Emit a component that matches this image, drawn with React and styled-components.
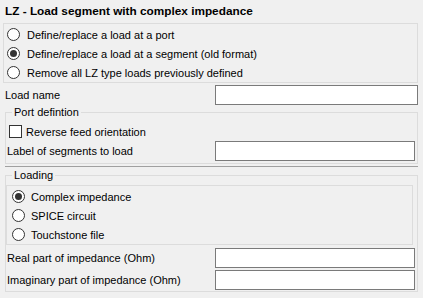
import React from 'react'
import styled, { createGlobalStyle } from 'styled-components'

const Global = createGlobalStyle`
  body {
    margin: 0;
    background: #f0f0f0;
    font-family: "Liberation Sans", Arial, sans-serif;
    font-size: 11px;
    color: #000;
  }
`

const Dialog = styled.div`
  width: 423px;
  height: 298px;
  box-sizing: border-box;
  padding: 3px 5px 0 3px;
`

const Title = styled.div`
  margin-left: 2px;
  height: 16px;
  line-height: 16px;
  font-weight: bold;
  font-size: 11.8px;
`

const OptionBox = styled.div`
  margin-top: 4px;
  height: 60px;
  box-sizing: border-box;
  border: 1px solid #dcdcdc;
  padding: 1px 0 0 3px;
`

const Option = styled.label`
  display: flex;
  align-items: center;
  gap: ${p => p.$gap || 7}px;
  height: 19px;
  margin-left: ${p => p.$indent || 0}px;
`

const Radio = styled.span`
  width: 13px;
  height: 13px;
  box-sizing: border-box;
  border-radius: 50%;
  border: 1px solid #333;
  background: #fff;
  display: flex;
  align-items: center;
  justify-content: center;
  &::after {
    content: '';
    width: 7px;
    height: 7px;
    border-radius: 50%;
    background: ${p => (p.$on ? '#333' : 'transparent')};
  }
`

const Check = styled.span`
  width: 13px;
  height: 13px;
  box-sizing: border-box;
  border: 1px solid #333;
  background: #fff;
`

const Field = styled.div`
  display: flex;
  align-items: center;
  justify-content: space-between;
  height: 20px;
  margin: ${p => p.$m || '0'};
`

const Input = styled.input`
  width: ${p => p.$w || 200}px;
  height: 20px;
  box-sizing: border-box;
  border: 1px solid #7a7a7a;
  background: #fff;
  margin: 0;
  padding: 0 3px;
  font: inherit;
`

const Group = styled.fieldset`
  margin: ${p => p.$m || '0 0 0 2px'};
  padding: ${p => p.$pad || '3px 2px 2px 1px'};
  border: 1px solid #dcdcdc;
  min-width: 0;
`

const Legend = styled.legend`
  margin-left: 5px;
  padding: 0 2px;
  line-height: 14px;
  height: 14px;
`

const Separator = styled.div`
  margin: 2px 0 0 2px;
  height: 1px;
  background: #a0a0a0;
`

const InnerBox = styled.div`
  margin: 3px 2px 0 -1px;
  border: 1px solid #dcdcdc;
  padding: 1px 0 0 5px;
`

const App = () => {
  return (
    <Dialog>
      <Global />
      <Title>LZ - Load segment with complex impedance</Title>
      <OptionBox>
        <Option><Radio />Define/replace a load at a port</Option>
        <Option><Radio $on />Define/replace a load at a segment (old format)</Option>
        <Option><Radio />Remove all LZ type loads previously defined</Option>
      </OptionBox>
      <Field $m="2px 0 0 2px">
        <span>Load name</span>
        <Input $w={203} />
      </Field>
      <Group>
        <Legend>Port defintion</Legend>
        <Option $gap={4} $indent={2}><Check />Reverse feed orientation</Option>
        <Field>
          <span>Label of segments to load</span>
          <Input $w={200} />
        </Field>
      </Group>
      <Separator />
      <Group $m="1px 0 0 2px" $pad="0 2px 1px 1px">
        <Legend>Loading</Legend>
        <InnerBox>
          <Option $gap={6}><Radio $on />Complex impedance</Option>
          <Option $gap={6}><Radio />SPICE circuit</Option>
          <Option $gap={6}><Radio />Touchstone file</Option>
        </InnerBox>
        <Field $m="3px 0 0 0">
          <span>Real part of impedance (Ohm)</span>
          <Input $w={200} />
        </Field>
        <Field $m="2px 0 0 0">
          <span>Imaginary part of impedance (Ohm)</span>
          <Input $w={200} />
        </Field>
      </Group>
    </Dialog>
  )
}

export default App
